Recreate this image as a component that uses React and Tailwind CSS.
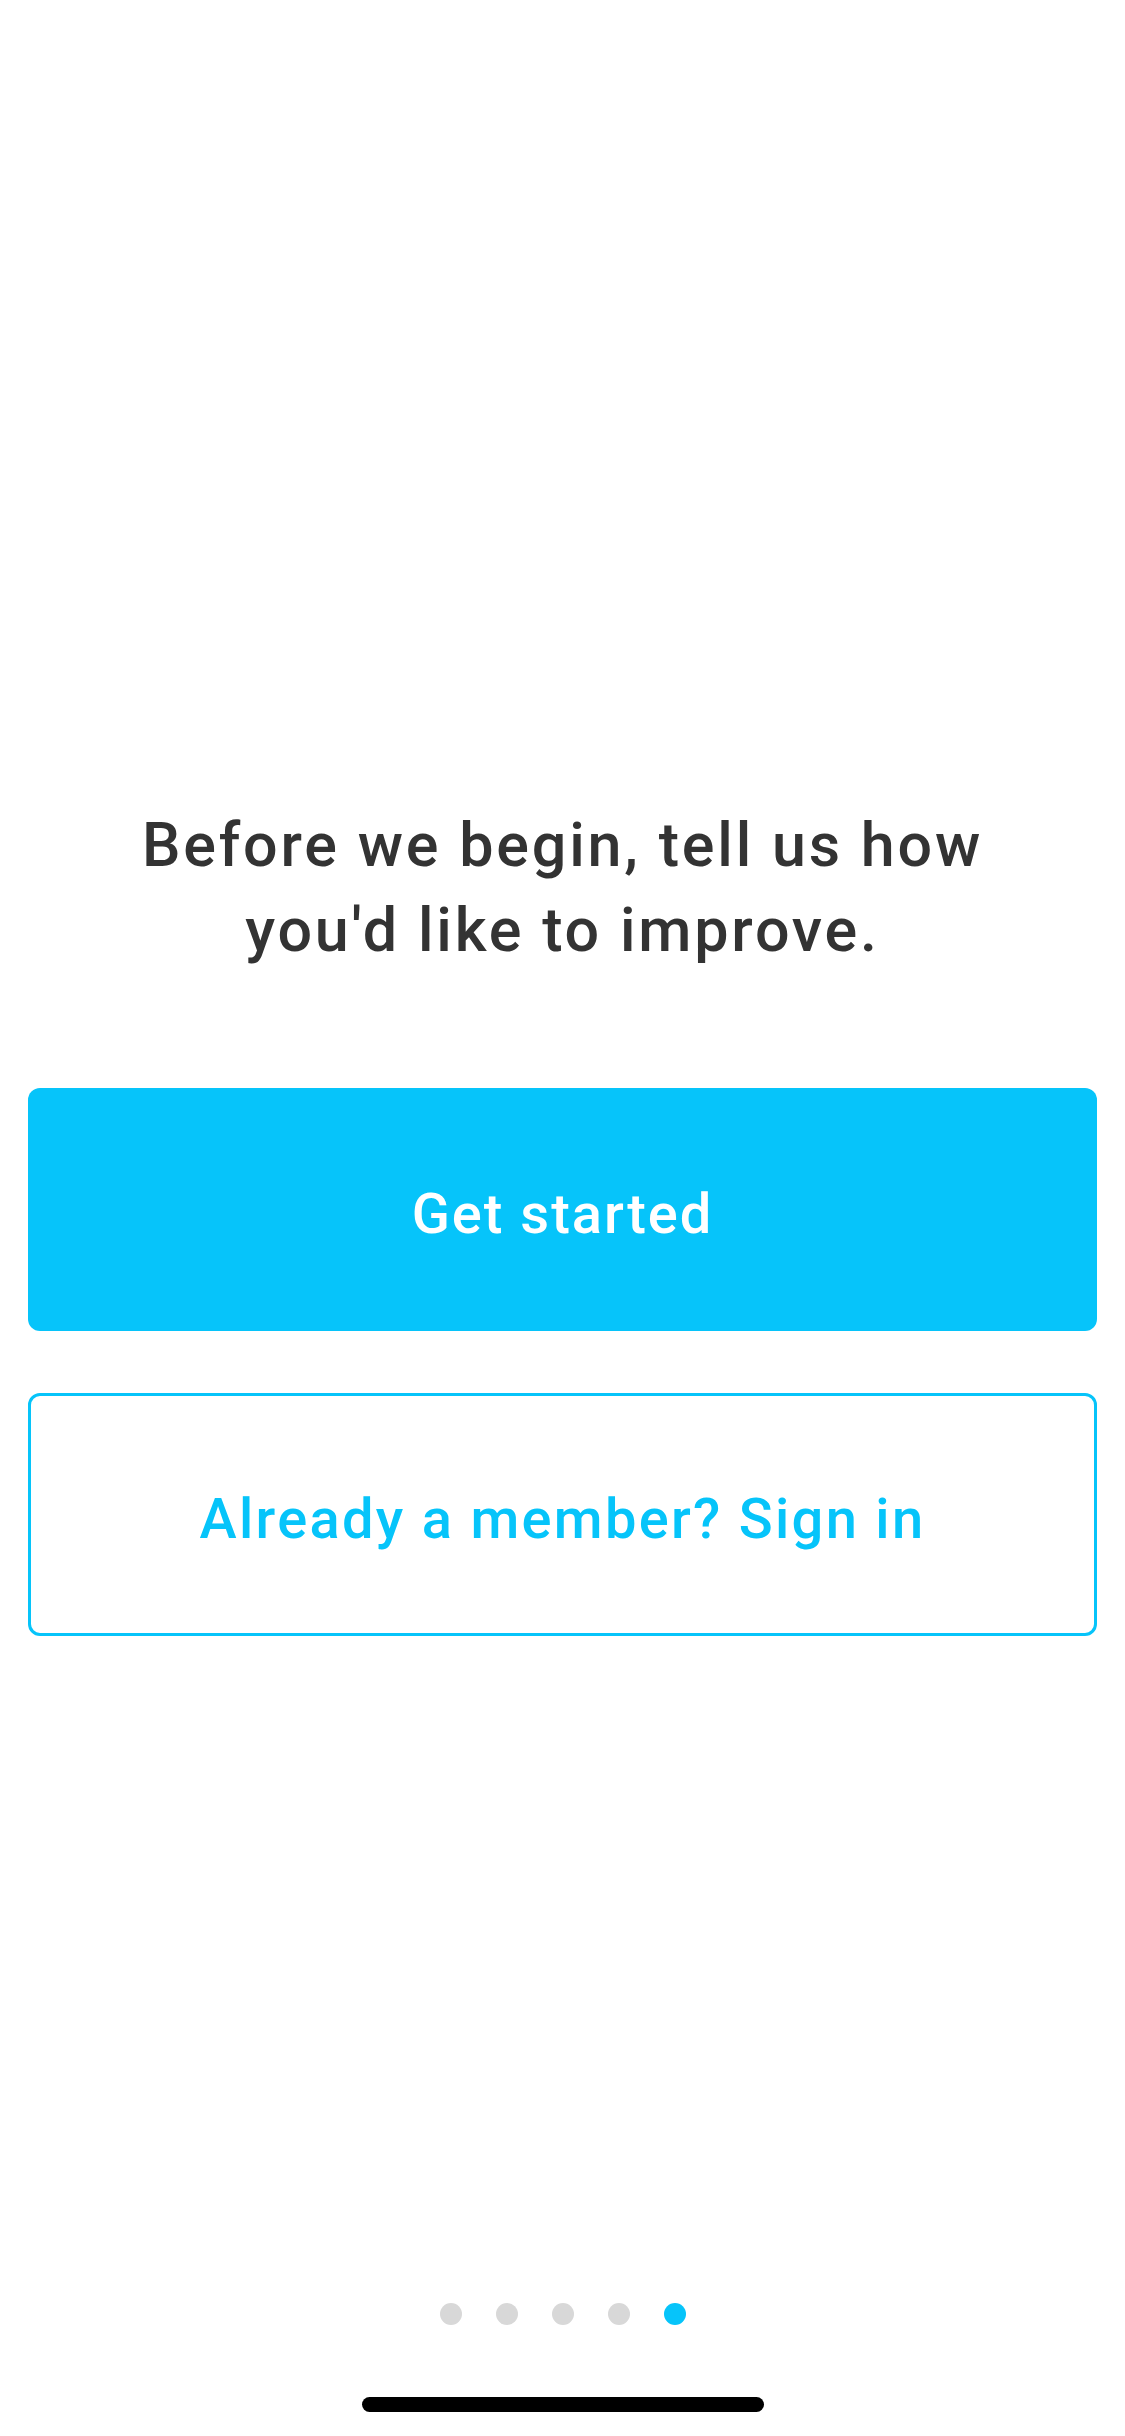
import React from 'react';

export default function App() {
  const dots = [0, 1, 2, 3, 4];
  const active = 4;

  return (
    <div
      className="w-[1125px] h-[2436px] bg-white flex flex-col"
      style={{ fontFamily: 'Roboto, "Noto Sans", sans-serif' }}
    >
      <h1 className="mt-[803px] text-center text-[61px] leading-[85px] font-medium text-[#333333] tracking-[2.8px]">
        Before we begin, tell us how
        <br />
        you'd like to improve.
      </h1>

      <div className="mt-[115px] mx-[28px] flex flex-col gap-[62px]">
        <button className="h-[243px] w-full rounded-[12px] bg-[#06c4fa] pt-[8px] text-white text-[56px] font-medium tracking-[2px]">
          Get started
        </button>
        <button className="h-[243px] w-full rounded-[12px] border-[3px] border-[#06c4fa] bg-white pt-[8px] text-[#06c4fa] text-[56px] font-medium tracking-[2.3px]">
          Already a member? Sign in
        </button>
      </div>

      <div className="mt-auto flex flex-col items-center">
        <div className="flex items-center gap-[34px]">
          {dots.map((d) => (
            <span
              key={d}
              className={
                d === active
                  ? 'h-[22px] w-[22px] rounded-full bg-[#06c4fa]'
                  : 'h-[22px] w-[22px] rounded-full bg-[#d8d8d8]'
              }
            />
          ))}
        </div>
        <div className="mt-[72px] mb-[24px] h-[15px] w-[402px] rounded-full bg-black" />
      </div>
    </div>
  );
}
